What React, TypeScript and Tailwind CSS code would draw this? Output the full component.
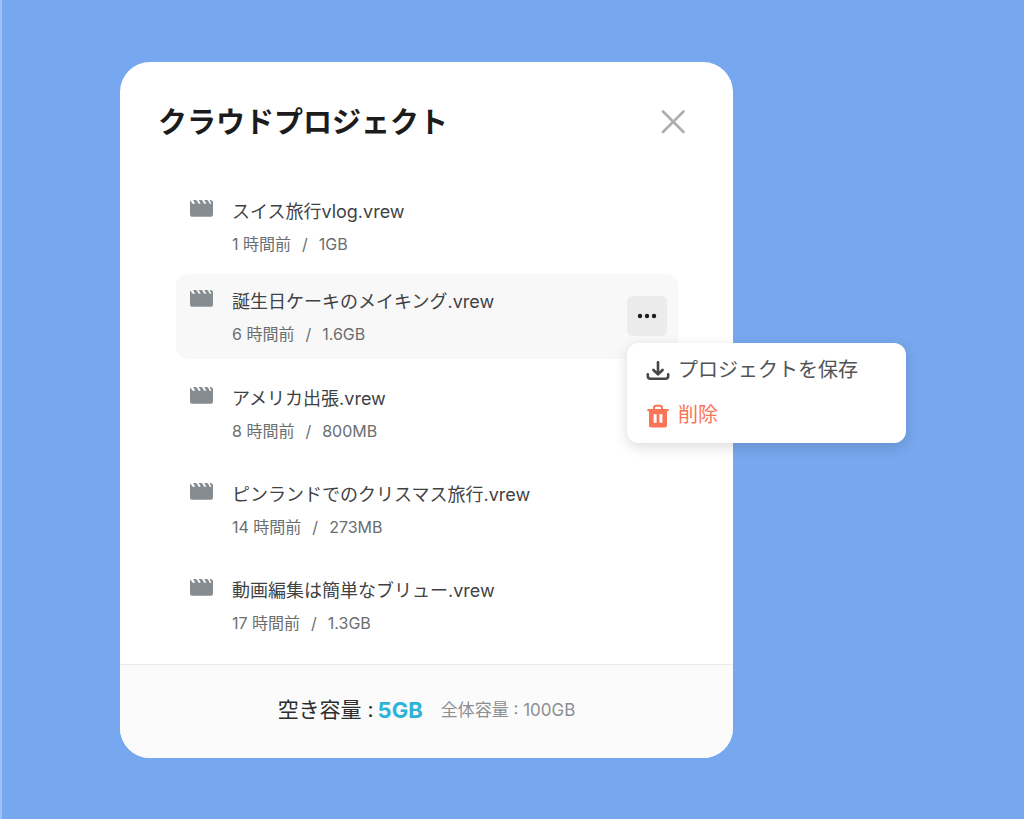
import { useState } from "react";

type Project = { name: string; age: string; size: string };

const projects: Project[] = [
  { name: "スイス旅行vlog.vrew", age: "1 時間前", size: "1GB" },
  { name: "誕生日ケーキのメイキング.vrew", age: "6 時間前", size: "1.6GB" },
  { name: "アメリカ出張.vrew", age: "8 時間前", size: "800MB" },
  { name: "ピンランドでのクリスマス旅行.vrew", age: "14 時間前", size: "273MB" },
  { name: "動画編集は簡単なブリュー.vrew", age: "17 時間前", size: "1.3GB" },
];

function ClapperIcon() {
  return (
    <svg viewBox="0 0 23 18" className="h-[18px] w-[23px] shrink-0" fill="#868d91" aria-hidden="true">
      <path d="M0.5 0.4 L2 2.9 Q2.5 3.8 3.6 3.8 H5.2 L3.1 0 H5.6 Q6.6 0 7.1 0.9 L8.2 2.9 Q8.7 3.8 9.5 3.8 H10.7 L8.7 0 H11.2 Q12.2 0 12.7 0.9 L13.8 2.9 Q14.3 3.8 15.1 3.8 H16.3 L14.3 0 H16.8 Q17.8 0 18.3 0.9 L19.3 2.9 Q19.8 3.8 20.6 3.8 H21.4 L19.6 0 H20.4 Q23 0 23 2.6 V14.2 Q23 16.8 20.4 16.8 H2.6 Q0 16.8 0 14.2 V1.6 Q0 0.8 0.5 0.4 Z" />
    </svg>
  );
}

function DownloadIcon() {
  return (
    <svg viewBox="0 0 24 20" className="h-5 w-6 shrink-0" fill="none" stroke="#444748" strokeWidth="2.6" strokeLinecap="round" strokeLinejoin="round" aria-hidden="true">
      <path d="M12 1.3 V13" />
      <path d="M7.4 9 L12 13.3 L16.6 9" />
      <path d="M1.8 13.4 V15 Q1.8 17.8 4.6 17.8 H19.4 Q22.2 17.8 22.2 15 V13.4" />
    </svg>
  );
}

function TrashIcon() {
  return (
    <svg viewBox="0 0 24 24" className="size-6 shrink-0" aria-hidden="true">
      <path d="M8 5 V4 Q8 1.8 10.2 1.8 H13.8 Q16 1.8 16 4 V5" fill="none" stroke="#fb7457" strokeWidth="2" />
      <path d="M2.2 5 H21.8 Q22.8 5 22.8 6 V6.4 Q22.8 7.2 21.8 7.2 H21 V21 Q21 23.6 18.4 23.6 H5.6 Q3 23.6 3 21 V7.2 H2.2 Q1.2 7.2 1.2 6.4 V6 Q1.2 5 2.2 5 Z" fill="#fb7457" />
      <path d="M7.6 10.2 H10.6 V18.8 H7.6 Z M13.4 10.2 H16.4 V18.8 H13.4 Z" fill="#fff" />
    </svg>
  );
}

function ProjectMenu() {
  return (
    <div
      role="menu"
      className="absolute top-[69px] left-[451px] z-10 flex w-[279px] flex-col gap-[14px] rounded-xl bg-white px-[19px] py-3 shadow-[0_4px_14px_rgba(0,0,0,0.14)]"
    >
      <button role="menuitem" className="flex h-[31px] items-center gap-2 text-[20px] leading-[31px] font-[390] text-[#505456]">
        <DownloadIcon />
        プロジェクトを保存
      </button>
      <button role="menuitem" className="flex h-[31px] items-center gap-2 text-[20px] leading-[31px] text-[#fb7457]">
        <TrashIcon />
        削除
      </button>
    </div>
  );
}

export default function App() {
  const [open, setOpen] = useState(true);
  return (
    <main className="min-h-screen border-l-2 border-[#9cc2f6] bg-[#77a7ee] py-[62px] pr-6 pl-[118px] font-['Inter','Noto_Sans_CJK_JP',sans-serif]">
      <section className="w-full max-w-[613px] rounded-[30px] bg-white">
        <header className="flex items-center justify-between pt-[41px] pr-[47px] pl-[38px]">
          <h1 className="text-[29px] leading-10 font-bold text-[#1c1c1c]">クラウドプロジェクト</h1>
          <button aria-label="閉じる" className="p-0">
            <svg viewBox="0 0 26 26" className="size-[26px]" stroke="#adafaf" strokeWidth="2.6" strokeLinecap="round" aria-hidden="true">
              <path d="M3 1.5 L23.5 22 M23.5 1.5 L3 22" />
            </svg>
          </button>
        </header>

        <ul className="flex flex-col gap-3 pt-[41px] pr-[55px] pb-[17px] pl-14">
          {projects.map((p, i) => {
            const active = i === 1;
            return (
              <li
                key={p.name}
                className={`relative flex items-start rounded-xl px-[14px] pt-[14px] first:-mb-[6px] ${active ? "bg-[#f8f8f8] pb-3" : "pb-[11px]"}`}
              >
                <div className="flex pt-[2px]">
                  <ClapperIcon />
                </div>
                <div className="ml-[19px] grow">
                  <p className="text-[18px] leading-7 font-[390] text-[#3f4244]">{p.name}</p>
                  <p className="mt-[6px] flex gap-[11px] text-[16px] leading-[25px] font-[390] text-[#6a6e70]">
                    <span>{p.age}</span>
                    <span>/</span>
                    <span>{p.size}</span>
                  </p>
                </div>
                {active && (
                  <button
                    aria-label="メニュー"
                    aria-expanded={open}
                    onClick={() => setOpen(!open)}
                    className="-mr-[3px] mt-2 flex size-10 items-center justify-center rounded-md bg-[#ebebeb]"
                  >
                    <svg viewBox="0 0 20 6" className="h-[6px] w-5" fill="#1c1c1c" aria-hidden="true">
                      <circle cx="3" cy="3" r="2.2" />
                      <circle cx="10" cy="3" r="2.2" />
                      <circle cx="17" cy="3" r="2.2" />
                    </svg>
                  </button>
                )}
                {active && open && <ProjectMenu />}
              </li>
            );
          })}
        </ul>

        <footer className="flex items-center justify-center rounded-b-[30px] border-t border-[#e9e9e9] bg-[#fbfbfb] pt-[29px] pb-8">
          <p className="flex gap-1 text-[21px] leading-8 text-[#2b2d2e]">
            <span>空き容量 :</span>
            <strong className="text-[22px] font-bold text-[#2bb3d8]">5GB</strong>
          </p>
          <p className="ml-[18px] text-[17px] leading-8 text-[#8b8f91]">全体容量 : 100GB</p>
        </footer>
      </section>
    </main>
  );
}
